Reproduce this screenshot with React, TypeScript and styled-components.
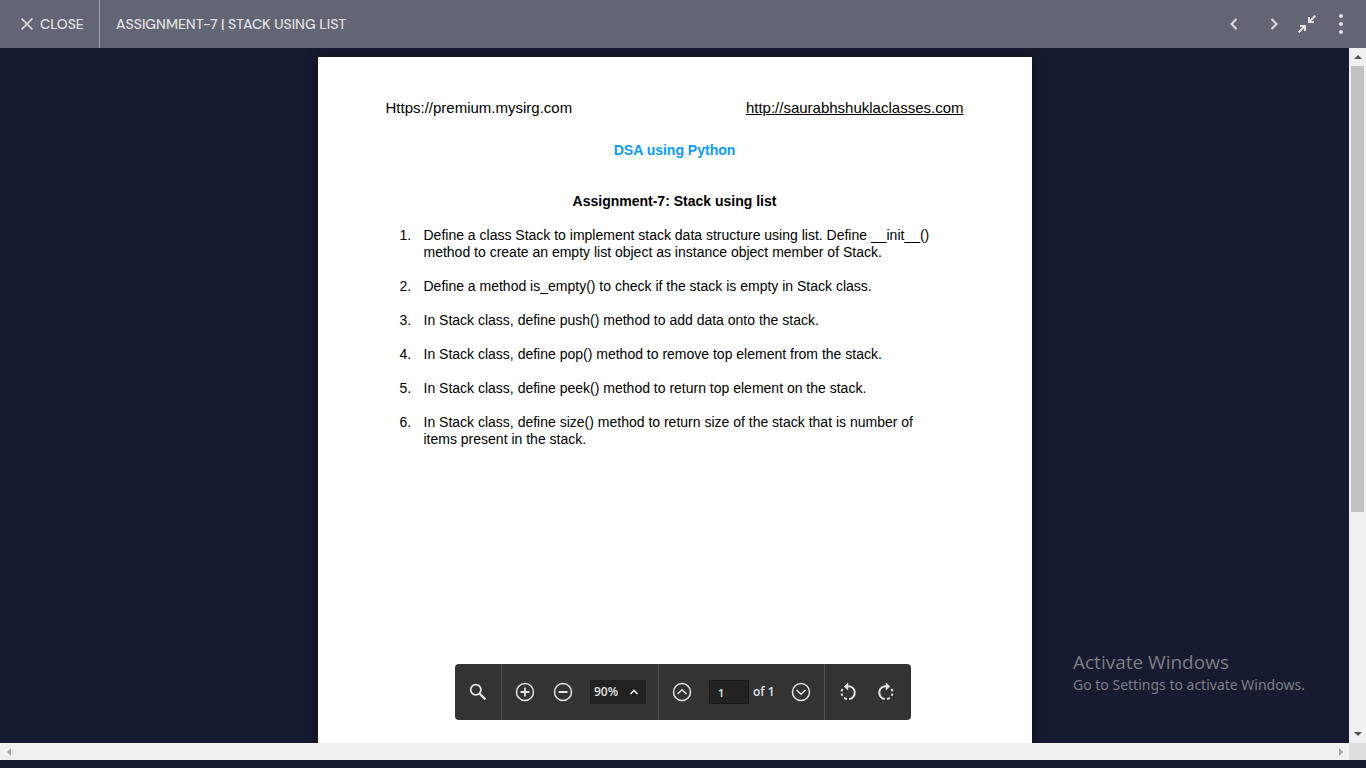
import React from "react";
import styled, { createGlobalStyle } from "styled-components";

const GlobalStyle = createGlobalStyle`
  *, *::before, *::after { box-sizing: border-box; }
  html, body { margin: 0; height: 100%; }
  #root { height: 100%; }
  body { background: #161b30; overflow: hidden; }
  button, input, select { font: inherit; color: inherit; margin: 0; }
`;

const Page = styled.div`
  position: relative;
  display: flex;
  flex-direction: column;
  height: 100vh;
  padding-bottom: 8px;
  background: #161b30;
`;

const Header = styled.header`
  display: flex;
  align-items: stretch;
  height: 48px;
  flex: none;
  padding-right: 4px;
  background: #626573;
  color: #e0e0e3;
  font: 500 14px/20px "DM Sans", Inter, sans-serif;
`;

const CloseButton = styled.button`
  display: flex;
  align-items: center;
  gap: 6px;
  width: 100px;
  padding: 0 0 0 20px;
  border: 0;
  border-right: 1px solid #a0a2ab;
  background: none;
`;

const Title = styled.h1`
  flex: 1;
  margin: 0;
  padding: 14px 16px;
  font: inherit;
  white-space: nowrap;
`;

const HeaderButton = styled.button<{ $width: number }>`
  display: grid;
  place-items: center;
  width: ${(p) => p.$width}px;
  padding: 0;
  border: 0;
  background: none;
`;

const Viewer = styled.main`
  flex: 1;
  min-height: 0;
  display: grid;
  grid-template-columns: minmax(0, 1fr) 17px;
  grid-template-rows: minmax(0, 1fr) 17px;
`;

const Canvas = styled.div`
  display: flex;
  justify-content: center;
  padding-top: 9px;
  overflow: hidden;
`;

const Sheet = styled.article`
  width: 714px;
  height: 1010px;
  flex: none;
  padding: 42px 68px;
  background: #fff;
  color: #000;
  box-shadow: 0 0 10px rgba(0, 0, 0, 0.6);
  font: 14px/17px "Liberation Sans", Arial, sans-serif;
`;

const SheetLinks = styled.div`
  display: flex;
  justify-content: space-between;
  font-size: 15px;
`;

const SheetLink = styled.a<{ $plain?: boolean }>`
  color: inherit;
  text-decoration: ${(p) => (p.$plain ? "none" : "underline")};
`;

const Course = styled.h2`
  margin: 26px 0 0;
  font-size: 14px;
  line-height: 17px;
  text-align: center;
  color: #0a9bff;
`;

const Heading = styled.h3`
  margin: 34px 0 0;
  font-size: 14px;
  line-height: 17px;
  text-align: center;
`;

const Tasks = styled.ol`
  display: flex;
  flex-direction: column;
  gap: 17px;
  margin: 17px 0 0;
  padding: 0 0 0 14px;
  list-style: none;
  counter-reset: task;
`;

const Task = styled.li`
  display: flex;
  counter-increment: task;
  &::before {
    content: counter(task) ".";
    width: 24px;
    flex: none;
  }
`;

const VerticalBar = styled.div`
  display: flex;
  flex-direction: column;
  background: #f0f0f0;
`;

const HorizontalBar = styled.div`
  display: flex;
  justify-content: space-between;
  background: #f0f0f0;
`;

const ScrollArrow = styled.button`
  display: grid;
  place-items: center;
  width: 17px;
  height: 18px;
  flex: none;
  padding: 0;
  border: 0;
  background: none;
`;

const Track = styled.div`
  flex: 1;
  display: flex;
  flex-direction: column;
  padding: 0 2px;
  &::after { content: ""; flex: 10; }
`;

const Thumb = styled.div`
  flex: 21;
  background: #c1c1c1;
`;

const Corner = styled.div`
  background: #dcdcdc;
`;

const ToolbarHolder = styled.div`
  position: absolute;
  left: 0;
  right: 0;
  bottom: 48px;
  display: flex;
  justify-content: center;
  pointer-events: none;
`;

const Toolbar = styled.div`
  display: flex;
  height: 56px;
  border-radius: 4px;
  background: #333;
  color: #e3e3e3;
  font: 600 12px/16px "Open Sans", "Noto Sans", sans-serif;
  pointer-events: auto;
`;

const Group = styled.div`
  display: flex;
  align-items: center;
  gap: 16px;
  padding: 0 12px;
  & + & { border-left: 1px solid #505050; }
  &:last-child { padding-right: 14px; }
`;

const ToolButton = styled.button`
  display: grid;
  place-items: center;
  width: 22px;
  height: 22px;
  padding: 0;
  border: 0;
  background: none;
`;

const ZoomBox = styled.label`
  display: grid;
  align-items: center;
  width: 56px;
  height: 24px;
  background: #222;
  & > * { grid-area: 1 / 1; }
  & > svg { justify-self: end; margin-right: 7px; pointer-events: none; }
`;

const ZoomSelect = styled.select`
  appearance: none;
  width: 100%;
  height: 24px;
  padding: 0 4px;
  border: 0;
  background: none;
`;

const PageField = styled.label`
  display: flex;
  align-items: center;
  gap: 4px;
  white-space: nowrap;
`;

const PageInput = styled.input`
  width: 40px;
  height: 24px;
  padding: 0 8px;
  border: 1px solid #1a1a1a;
  background: #222;
  font-size: 11px;
`;

const PageTotal = styled.span`
  width: 21px;
`;

const Watermark = styled.aside`
  position: absolute;
  right: 57px;
  bottom: 73px;
  width: 236px;
  color: #7c7e86;
  font: 14px/20px "Segoe UI", "Noto Sans", sans-serif;
  white-space: nowrap;
  pointer-events: none;
`;

const WatermarkTitle = styled.div`
  font-family: "Segoe UI", "Open Sans", sans-serif;
  font-size: 19px;
  line-height: 26px;
`;

type ShapeProps = {
  w: number;
  h: number;
  d: string;
  stroke?: number;
};

const Stroke = ({ w, h, d, stroke = 2 }: ShapeProps) => (
  <svg width={w} height={h} viewBox={`0 0 ${w} ${h}`} fill="none" stroke="currentColor" strokeWidth={stroke} aria-hidden="true">
    <path d={d} />
  </svg>
);

const Fill = ({ w, h, d, color = "currentColor" }: { w: number; h: number; d: string; color?: string }) => (
  <svg width={w} height={h} viewBox={`0 0 ${w} ${h}`} fill={color} aria-hidden="true">
    <path d={d} />
  </svg>
);

const Ringed = ({ d, stroke }: { d: string; stroke: number }) => (
  <svg width="20" height="20" viewBox="0 0 20 20" fill="none" stroke="currentColor" aria-hidden="true">
    <circle cx="10" cy="10" r="8.5" strokeWidth="1.5" />
    <path d={d} strokeWidth={stroke} />
  </svg>
);

const RotateIcon = ({ flip }: { flip?: boolean }) => (
  <svg width="18" height="20" viewBox="0 0 18 20" fill="none" stroke="currentColor" aria-hidden="true">
    <g transform={flip ? "translate(18 0) scale(-1 1)" : undefined}>
      <path d="M8.5 4.3A6.4 6.4 0 0 1 10.2 17" strokeWidth="2" />
      <path d="M8 17A6.4 6.4 0 0 1 5.2 15.8M3.4 13.8A6.4 6.4 0 0 1 2.6 11.6M2.6 9.4A6.4 6.4 0 0 1 3.6 7" strokeWidth="2" />
      <path d="M9.2 .4V8.4L4.8 4.4Z" fill="currentColor" stroke="none" />
    </g>
  </svg>
);

const tasks = [
  <>Define a class Stack to implement stack data structure using list. Define __init__()<br />method to create an empty list object as instance object member of Stack.</>,
  "Define a method is_empty() to check if the stack is empty in Stack class.",
  "In Stack class, define push() method to add data onto the stack.",
  "In Stack class, define pop() method to remove top element from the stack.",
  "In Stack class, define peek() method to return top element on the stack.",
  <>In Stack class, define size() method to return size of the stack that is number of<br />items present in the stack.</>,
];

export default function App() {
  return (
    <Page>
      <GlobalStyle />
      <Header>
        <CloseButton>
          <Stroke w={14} h={14} d="M1.5 1.5L12.5 12.5M12.5 1.5L1.5 12.5" stroke={1.7} />
          CLOSE
        </CloseButton>
        <Title>ASSIGNMENT-7 | STACK USING LIST</Title>
        <HeaderButton $width={40} aria-label="Previous">
          <Stroke w={8} h={12} d="M6.5 1L1.5 6L6.5 11" />
        </HeaderButton>
        <HeaderButton $width={40} aria-label="Next">
          <Stroke w={8} h={12} d="M1.5 1L6.5 6L1.5 11" />
        </HeaderButton>
        <HeaderButton $width={26} aria-label="Exit full screen">
          <Stroke w={18} h={18} d="M11 2V7H16M11.5 6.5L17.4 .6M2 11H7V16M6.5 11.5L.6 17.4" />
        </HeaderButton>
        <HeaderButton $width={42} aria-label="More options">
          <Fill w={4} h={20} d="M2 0a2 2 0 1 1 0 4a2 2 0 1 1 0-4M2 8a2 2 0 1 1 0 4a2 2 0 1 1 0-4M2 16a2 2 0 1 1 0 4a2 2 0 1 1 0-4" />
        </HeaderButton>
      </Header>

      <Viewer>
        <Canvas>
          <Sheet>
            <SheetLinks>
              <SheetLink $plain href="#premium">Https://premium.mysirg.com</SheetLink>
              <SheetLink href="#classes">http://saurabhshuklaclasses.com</SheetLink>
            </SheetLinks>
            <Course>DSA using Python</Course>
            <Heading>Assignment-7: Stack using list</Heading>
            <Tasks>
              {tasks.map((task, i) => (
                <Task key={i}><div>{task}</div></Task>
              ))}
            </Tasks>
          </Sheet>
        </Canvas>
        <VerticalBar>
          <ScrollArrow aria-label="Scroll up"><Fill w={8} h={4} d="M0 4L4 0L8 4Z" color="#505050" /></ScrollArrow>
          <Track><Thumb /></Track>
          <ScrollArrow aria-label="Scroll down"><Fill w={8} h={4} d="M0 0L4 4L8 0Z" color="#505050" /></ScrollArrow>
        </VerticalBar>
        <HorizontalBar>
          <ScrollArrow aria-label="Scroll left"><Fill w={4} h={8} d="M4 0L0 4L4 8Z" color="#a3a3a3" /></ScrollArrow>
          <ScrollArrow aria-label="Scroll right"><Fill w={4} h={8} d="M0 0L4 4L0 8Z" color="#a3a3a3" /></ScrollArrow>
        </HorizontalBar>
        <Corner />
      </Viewer>

      <ToolbarHolder>
        <Toolbar>
          <Group>
            <ToolButton aria-label="Search">
              <svg width="18" height="18" viewBox="0 0 18 18" fill="none" stroke="currentColor" aria-hidden="true">
                <circle cx="6.8" cy="6.8" r="5.1" strokeWidth="1.8" />
                <path d="M10.5 10.5L16.4 16.4" strokeWidth="2.3" />
              </svg>
            </ToolButton>
          </Group>
          <Group>
            <ToolButton aria-label="Zoom in"><Ringed d="M10 5.5V14.5M5.5 10H14.5" stroke={1.8} /></ToolButton>
            <ToolButton aria-label="Zoom out"><Ringed d="M5.5 10H14.5" stroke={2} /></ToolButton>
            <ZoomBox>
              <ZoomSelect aria-label="Zoom level" defaultValue="90">
                <option value="90">90%</option>
                <option value="100">100%</option>
              </ZoomSelect>
              <Stroke w={10} h={6} d="M1.5 5L5 1.5L8.5 5" stroke={1.6} />
            </ZoomBox>
          </Group>
          <Group>
            <ToolButton aria-label="Previous page"><Ringed d="M5.5 12L10 7.8L14.5 12" stroke={1.5} /></ToolButton>
            <PageField>
              <PageInput defaultValue="1" aria-label="Page number" />
              <PageTotal>of 1</PageTotal>
            </PageField>
            <ToolButton aria-label="Next page"><Ringed d="M5.5 8L10 12.2L14.5 8" stroke={1.5} /></ToolButton>
          </Group>
          <Group>
            <ToolButton aria-label="Rotate left"><RotateIcon /></ToolButton>
            <ToolButton aria-label="Rotate right"><RotateIcon flip /></ToolButton>
          </Group>
        </Toolbar>
      </ToolbarHolder>

      <Watermark>
        <WatermarkTitle>Activate Windows</WatermarkTitle>
        Go to Settings to activate Windows.
      </Watermark>
    </Page>
  );
}
